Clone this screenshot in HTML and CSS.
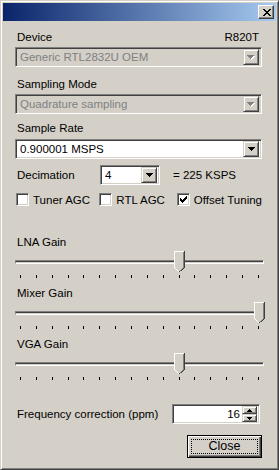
FILE: index.html
```html
<!DOCTYPE html>
<html lang="en">
<head>
    <meta charset="UTF-8">
    <title>RTL-SDR Controller</title>
    <link rel="stylesheet" href="styles.css">
</head>
<body>

<div class="window">
    <div class="titlebar">
        <span class="title-close">
            <svg width="8" height="7" viewBox="0 0 8 7"><path d="M0 0h2v1H0zM6 0h2v1H6zM1 1h2v1H1zM5 1h2v1H5zM2 2h4v1H2zM3 3h2v1H3zM2 4h4v1H2zM1 5h2v1H1zM5 5h2v1H5zM0 6h2v1H0zM6 6h2v1H6z" fill="#000"/></svg>
        </span>
    </div>

    <div class="content">
        <div class="label split first">
            <span>Device</span>
            <span>R820T</span>
        </div>
        <div class="combo disabled mt3">
            <span class="combo-text">Generic RTL2832U OEM</span>
            <span class="combo-btn">
                <svg width="8" height="5" viewBox="0 0 8 5"><path d="M1 1h7v1H1zM2 2h5v1H2zM3 3h3v1H3zM4 4h1v1H4z" fill="#fff"/><path d="M0 0h7v1H0zM1 1h5v1H1zM2 2h3v1H2zM3 3h1v1H3z" fill="#808080"/></svg>
            </span>
        </div>

        <div class="label sec-mode">Sampling Mode</div>
        <div class="combo disabled mt3">
            <span class="combo-text">Quadrature sampling</span>
            <span class="combo-btn">
                <svg width="8" height="5" viewBox="0 0 8 5"><path d="M1 1h7v1H1zM2 2h5v1H2zM3 3h3v1H3zM4 4h1v1H4z" fill="#fff"/><path d="M0 0h7v1H0zM1 1h5v1H1zM2 2h3v1H2zM3 3h1v1H3z" fill="#808080"/></svg>
            </span>
        </div>

        <div class="label sec-rate">Sample Rate</div>
        <div class="combo mt4">
            <span class="combo-text">0.900001 MSPS</span>
            <span class="combo-btn">
                <svg width="7" height="4" viewBox="0 0 7 4"><path d="M0 0h7v1H0zM1 1h5v1H1zM2 2h3v1H2zM3 3h1v1H3z" fill="#000"/></svg>
            </span>
        </div>

        <div class="decim-row">
            <span class="decim-label">Decimation</span>
            <div class="combo decim-combo">
                <span class="combo-text">4</span>
                <span class="combo-btn">
                    <svg width="7" height="4" viewBox="0 0 7 4"><path d="M0 0h7v1H0zM1 1h5v1H1zM2 2h3v1H2zM3 3h1v1H3z" fill="#000"/></svg>
                </span>
            </div>
            <span class="decim-result">= 225 KSPS</span>
        </div>

        <div class="checks-row">
            <label class="check check-tuner"><span class="box"></span>Tuner AGC</label>
            <label class="check check-rtl"><span class="box"></span>RTL AGC</label>
            <label class="check"><span class="box">
                <svg width="7" height="7" viewBox="0 0 7 7"><path d="M6 0h1v1H6zM5 1h2v1H5zM0 2h1v1H0zM4 2h3v1H4zM0 3h2v1H0zM3 3h3v1H3zM0 4h5v1H0zM1 5h3v1H1zM2 6h1v1H2z" fill="#000"/></svg>
            </span>Offset Tuning</label>
        </div>

        <div class="slider-group first-slider">
            <div class="label">LNA Gain</div>
            <div class="slider">
                <div class="track"></div>
                <div class="rail">
                    <svg class="thumb" style="left: 66.667%" width="11" height="21" viewBox="0 0 11 21" shape-rendering="crispEdges"><path d="M0 0H11V16L5.5 21L0 16Z" fill="#d4d0c8"/><path d="M0 0h10v1H1v15H0z" fill="#fff"/><path d="M10 0h1v16h-1zM9 1h1v15H9z" fill="#404040"/><path d="M9 1h1v15H9z" fill="#808080"/><path d="M0 16h1v1H0zM1 17h1v1H1zM2 18h1v1H2zM3 19h1v1H3zM4 20h1v1H4z" fill="#fff"/><path d="M10 16h1v1h-1zM9 17h1v1H9zM8 18h1v1H8zM7 19h1v1H7zM6 20h-1v1h1z" fill="#404040"/><path d="M9 16h1v1H9zM8 17h1v1H8zM7 18h1v1H7zM6 19h1v1H6z" fill="#808080"/></svg>
                </div>
            </div>
            <div class="ticks">
                <i></i><i></i><i></i><i></i><i></i><i></i><i></i><i></i>
                <i></i><i></i><i></i><i></i><i></i><i></i><i></i><i></i>
            </div>
        </div>

        <div class="slider-group">
            <div class="label">Mixer Gain</div>
            <div class="slider">
                <div class="track"></div>
                <div class="rail">
                    <svg class="thumb" style="left: 100%" width="11" height="21" viewBox="0 0 11 21" shape-rendering="crispEdges"><path d="M0 0H11V16L5.5 21L0 16Z" fill="#d4d0c8"/><path d="M0 0h10v1H1v15H0z" fill="#fff"/><path d="M10 0h1v16h-1zM9 1h1v15H9z" fill="#404040"/><path d="M9 1h1v15H9z" fill="#808080"/><path d="M0 16h1v1H0zM1 17h1v1H1zM2 18h1v1H2zM3 19h1v1H3zM4 20h1v1H4z" fill="#fff"/><path d="M10 16h1v1h-1zM9 17h1v1H9zM8 18h1v1H8zM7 19h1v1H7zM6 20h-1v1h1z" fill="#404040"/><path d="M9 16h1v1H9zM8 17h1v1H8zM7 18h1v1H7zM6 19h1v1H6z" fill="#808080"/></svg>
                </div>
            </div>
            <div class="ticks">
                <i></i><i></i><i></i><i></i><i></i><i></i><i></i><i></i>
                <i></i><i></i><i></i><i></i><i></i><i></i><i></i><i></i>
            </div>
        </div>

        <div class="slider-group">
            <div class="label">VGA Gain</div>
            <div class="slider">
                <div class="track"></div>
                <div class="rail">
                    <svg class="thumb" style="left: 66.667%" width="11" height="21" viewBox="0 0 11 21" shape-rendering="crispEdges"><path d="M0 0H11V16L5.5 21L0 16Z" fill="#d4d0c8"/><path d="M0 0h10v1H1v15H0z" fill="#fff"/><path d="M10 0h1v16h-1zM9 1h1v15H9z" fill="#404040"/><path d="M9 1h1v15H9z" fill="#808080"/><path d="M0 16h1v1H0zM1 17h1v1H1zM2 18h1v1H2zM3 19h1v1H3zM4 20h1v1H4z" fill="#fff"/><path d="M10 16h1v1h-1zM9 17h1v1H9zM8 18h1v1H8zM7 19h1v1H7zM6 20h-1v1h1z" fill="#404040"/><path d="M9 16h1v1H9zM8 17h1v1H8zM7 18h1v1H7zM6 19h1v1H6z" fill="#808080"/></svg>
                </div>
            </div>
            <div class="ticks">
                <i></i><i></i><i></i><i></i><i></i><i></i><i></i><i></i>
                <i></i><i></i><i></i><i></i><i></i><i></i><i></i><i></i>
            </div>
        </div>

        <div class="freq-row">
            <span class="freq-label">Frequency correction (ppm)</span>
            <div class="spin">
                <span class="spin-value">16</span>
                <span class="spin-btns">
                    <span class="spin-btn"><svg width="5" height="3" viewBox="0 0 5 3"><path d="M2 0h1v1H2zM1 1h3v1H1zM0 2h5v1H0z" fill="#000"/></svg></span>
                    <span class="spin-btn"><svg width="5" height="3" viewBox="0 0 5 3"><path d="M0 0h5v1H0zM1 1h3v1H1zM2 2h1v1H2z" fill="#000"/></svg></span>
                </span>
            </div>
        </div>

        <div class="button-row">
            <button class="btn-default"><span class="focus">Close</span></button>
        </div>
    </div>
</div>

</body>
</html>
```

FILE: styles.css
```css
* {
    box-sizing: border-box;
}

body {
    margin: 0;
    background-color: #d4d0c8;
    font-family: 'Liberation Sans', Arial, sans-serif;
    font-size: 11.5px;
    color: #000;
}

/* outer window frame, classic raised edge */
.window {
    width: 279px;
    height: 470px;
    background-color: #d4d0c8;
    border: 1px solid;
    border-color: #d4d0c8 #404040 #404040 #d4d0c8;
    box-shadow: inset 1px 1px #fff, inset -1px -1px #808080;
    padding: 2px;
    display: flex;
    flex-direction: column;
}

.titlebar {
    height: 18px;
    background: linear-gradient(to right, #0a246a, #a6caf0);
    display: flex;
    justify-content: flex-end;
    align-items: center;
    padding-right: 2px;
}

.title-close {
    width: 16px;
    height: 14px;
    background-color: #d4d0c8;
    border: 1px solid;
    border-color: #fff #404040 #404040 #fff;
    box-shadow: inset -1px -1px #808080;
    display: flex;
    align-items: center;
    justify-content: center;
    padding-left: 1px;
}

.content {
    flex: 1;
    padding: 0 14px 0 12px;
    display: flex;
    flex-direction: column;
}

.label {
    height: 13px;
    line-height: 13px;
    padding-left: 2px;
    white-space: nowrap;
}

.split {
    display: flex;
    justify-content: space-between;
    padding-right: 3px;
}

.first {
    margin-top: 10px;
}

.sec-mode {
    margin-top: 11px;
}

.sec-rate {
    margin-top: 8px;
}

.mt3 {
    margin-top: 3px;
}

.mt4 {
    margin-top: 4px;
}

/* sunken combo box */
.combo {
    height: 20px;
    background-color: #fff;
    border: 1px solid;
    border-color: #808080 #fff #fff #808080;
    box-shadow: inset 1px 1px #404040, inset -1px -1px #d4d0c8;
    padding: 2px;
    display: flex;
    align-items: center;
}

.combo.disabled {
    background-color: #d4d0c8;
    color: #808080;
}

.combo-text {
    flex: 1;
    padding-left: 2px;
    line-height: 16px;
    white-space: nowrap;
    overflow: hidden;
}

.combo-btn {
    width: 16px;
    height: 16px;
    background-color: #d4d0c8;
    border: 1px solid;
    border-color: #d4d0c8 #404040 #404040 #d4d0c8;
    box-shadow: inset 1px 1px #fff, inset -1px -1px #808080;
    display: flex;
    align-items: center;
    justify-content: center;
}

.decim-row {
    margin-top: 6px;
    height: 20px;
    display: flex;
    align-items: center;
}

.decim-label {
    width: 85px;
    padding-left: 2px;
}

.decim-combo {
    width: 60px;
}

.decim-result {
    margin-left: 13px;
}

.checks-row {
    margin-top: 8px;
    height: 13px;
    display: flex;
    align-items: center;
    padding-left: 1px;
}

.check {
    display: flex;
    align-items: center;
    white-space: nowrap;
}

.check-tuner {
    width: 85px;
}

.check-rtl {
    width: 79px;
}

.box {
    width: 13px;
    height: 13px;
    margin-right: 4px;
    background-color: #fff;
    border: 1px solid;
    border-color: #808080 #fff #fff #808080;
    box-shadow: inset 1px 1px #404040, inset -1px -1px #d4d0c8;
    display: flex;
    align-items: center;
    justify-content: center;
}

/* trackbars */
.slider-group {
    margin-top: 9px;
    margin-right: -2px;
}

.first-slider {
    margin-top: 30px;
}

.slider {
    position: relative;
    height: 22px;
    margin-top: 2px;
    display: flex;
    align-items: center;
}

.track {
    flex: 1;
    height: 4px;
    border: 1px solid;
    border-color: #808080 #fff #fff #808080;
    background-color: #404040;
    box-shadow: inset 0 1px #404040, inset 0 -1px #d4d0c8;
}

.rail {
    position: absolute;
    top: 0;
    left: 5px;
    right: 5px;
    height: 22px;
}

.thumb {
    position: absolute;
    top: 0;
    margin-left: -5px;
}

.ticks {
    margin-top: 2px;
    height: 3px;
    padding: 0 5px;
    display: flex;
    justify-content: space-between;
}

.ticks i {
    width: 1px;
    height: 3px;
    background-color: #000;
}

.freq-row {
    margin-top: 24px;
    height: 20px;
    display: flex;
    align-items: center;
    justify-content: space-between;
    padding-right: 2px;
}

.freq-label {
    padding-left: 2px;
}

.spin {
    width: 88px;
    height: 20px;
    background-color: #fff;
    border: 1px solid;
    border-color: #808080 #fff #fff #808080;
    box-shadow: inset 1px 1px #404040, inset -1px -1px #d4d0c8;
    padding: 2px;
    display: flex;
    align-items: center;
}

.spin-value {
    flex: 1;
    text-align: right;
    padding-right: 2px;
}

.spin-btns {
    width: 15px;
    height: 16px;
    display: flex;
    flex-direction: column;
}

.spin-btn {
    flex: 1;
    background-color: #d4d0c8;
    border: 1px solid;
    border-color: #d4d0c8 #404040 #404040 #d4d0c8;
    box-shadow: inset 1px 1px #fff, inset -1px -1px #808080;
    display: flex;
    align-items: center;
    justify-content: center;
}

.button-row {
    margin-top: 11px;
    display: flex;
    justify-content: flex-end;
}

.btn-default {
    width: 75px;
    height: 23px;
    padding: 3px;
    font-family: inherit;
    font-size: 12.5px;
    color: #000;
    background-color: #d4d0c8;
    border: 1px solid #000;
    box-shadow: inset 1px 1px #fff, inset -1px -1px #404040, inset -2px -2px #808080;
    display: flex;
}

.focus {
    flex: 1;
    border: 1px dotted #000;
    display: flex;
    align-items: center;
    justify-content: center;
    line-height: 13px;
}
```
